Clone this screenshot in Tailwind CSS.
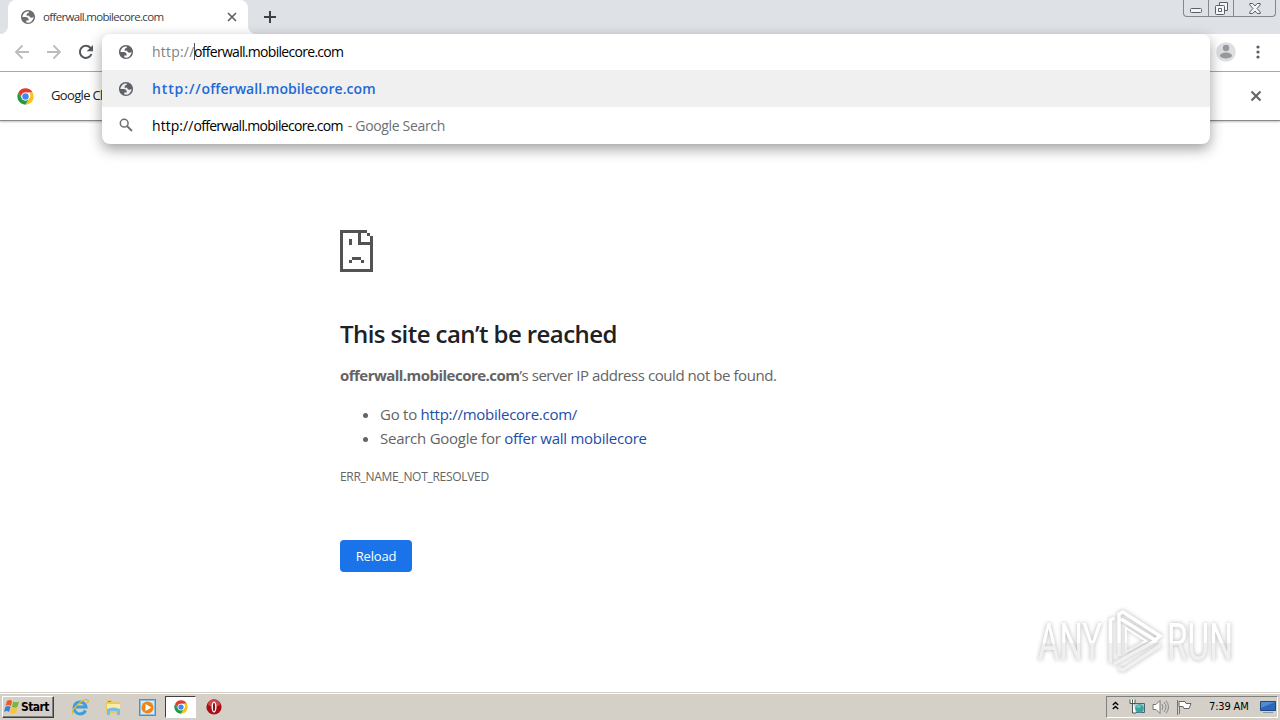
<!DOCTYPE html>
<html lang="en">
<head>
    <meta charset="UTF-8">
    <meta content="width=device-width, initial-scale=1.0" name="viewport">
    <title>offerwall.mobilecore.com</title>
    <script src="https://cdn.jsdelivr.net/npm/@tailwindcss/browser@4"></script>
</head>
<body class="relative w-[1280px] h-[720px] overflow-hidden flex flex-col bg-white font-['Open_Sans','Noto_Sans',sans-serif] text-[#202124] whitespace-nowrap">
    <svg class="hidden">
        <symbol id="globe" viewBox="2 2 20 20">
            <path fill="currentColor" fill-rule="evenodd" d="M12 2C6.480 2 2 6.480 2 12s4.480 10 10 10 10-4.480 10-10S17.520 2 12 2zM4 12h4.400c3.407.022 4.922 1.730 4.543 5.127H9.488v2.470a8.004 8.004 0 0 0 10.498-8.083C19.327 12.504 18.332 13 17 13c-2.137 0-3.206-.916-3.206-2.750h-3.748c-.274-2.728.683-4.092 2.870-4.092 0-.975.327-1.597.811-1.970A8.004 8.004 0 0 0 4 12z"/>
        </symbol>
        <symbol id="chrome" viewBox="0 0 48 48">
            <circle cx="24" cy="24" r="23" fill="#fff"/>
            <path fill="#e33b2e" d="M24 1a23 23 0 0 1 19.900 11.500H24A11.500 11.500 0 0 0 14 29.700L4.100 12.500A23 23 0 0 1 24 1z"/>
            <path fill="#fbc116" d="M43.900 12.500A23 23 0 0 1 24 47l9.960-17.250A11.500 11.500 0 0 0 33.900 12.500z"/>
            <path fill="#279847" d="M24 47A23 23 0 0 1 4.100 12.500l9.940 17.250A11.500 11.500 0 0 0 33.960 29.750z"/>
            <circle cx="24" cy="24" r="11.500" fill="#fff"/>
            <circle cx="24" cy="24" r="9" fill="#4285f4"/>
        </symbol>
    </svg>

    <!-- tab strip -->
    <div class="h-[34px] shrink-0 bg-[#dee1e6] flex justify-between">
        <div class="flex">
            <svg class="w-2 h-2 self-end" viewBox="0 0 8 8"><path d="M8 0v8H0a8 8 0 0 0 8-8z" fill="#fff"/></svg>
            <div class="w-[240px] h-[34px] bg-white rounded-t-lg flex items-center pl-[13px] pr-[10px]">
                <svg class="w-[14px] h-[14px] text-[#6b6e72]"><use href="#globe"/></svg>
                <span class="ml-2 flex-1 text-[11.500px] tracking-[-0.670px] text-[#3c4043]">offerwall.mobilecore.com</span>
                <svg class="w-3 h-3" viewBox="0 0 12 12"><path d="M2 2l8 8M10 2l-8 8" stroke="#5f6368" stroke-width="1.700"/></svg>
            </div>
            <svg class="w-2 h-2 self-end" viewBox="0 0 8 8"><path d="M0 0v8h8a8 8 0 0 1-8-8z" fill="#fff"/></svg>
            <svg class="w-3 h-3 ml-2 mt-[11px]" viewBox="0 0 12 12"><path d="M6 0v12M0 6h12" stroke="#3c4043" stroke-width="2"/></svg>
        </div>
        <div class="w-[93px] h-[17px] mr-1 border border-t-0 border-[#84878c] rounded-b flex">
            <div class="w-[25px] border-r border-[#84878c] flex justify-center items-center pt-1"><svg class="w-3 h-[5px]" viewBox="0 0 12 5"><rect x=".5" y=".5" width="11" height="4" rx="1" fill="#f4f5f6" stroke="#5b5e68"/></svg></div>
            <div class="w-[25px] border-r border-[#84878c] flex justify-center items-center"><svg class="w-[13px] h-[13px]" viewBox="0 0 13 13"><path d="M4.500.5h8v8h-8z" fill="#f4f5f6" stroke="#5b5e68"/><rect x=".5" y="3.500" width="9" height="9" rx="1" fill="#f4f5f6" stroke="#5b5e68"/><path d="M3.500 6.500h3v3h-3z" fill="#fff" stroke="#5b5e68"/></svg></div>
            <div class="flex-1 flex justify-center items-center"><svg class="w-3 h-[11px]" viewBox="0 0 12 11"><path d="M.8.5h3L6 3 8.200.5h3v1.500L8 5.500l3.200 3.500v1.500h-3L6 8l-2.200 2.500h-3V9L4 5.500.8 2z" fill="#f4f5f6" stroke="#5b5e68"/></svg></div>
        </div>
    </div>

    <!-- toolbar -->
    <div class="h-[38px] shrink-0 border-b border-[#a9abad] flex items-center justify-between px-[14px] pb-px">
        <div class="flex gap-4">
            <svg class="w-4 h-4" viewBox="0 0 16 16"><path d="M15 8H2.500M8.500 1.500L2 8l6.500 6.500" fill="none" stroke="#babcbe" stroke-width="1.800"/></svg>
            <svg class="w-4 h-4" viewBox="0 0 16 16"><path d="M1 8h12.500M7.500 1.500L14 8l-6.500 6.500" fill="none" stroke="#babcbe" stroke-width="1.800"/></svg>
            <svg class="w-4 h-4" viewBox="0 0 16 16"><path d="M13.500 10A6 6 0 1 1 12.300 3.800L13.500 5" fill="none" stroke="#56595d" stroke-width="2"/><path d="M15 1v6.300H8.700z" fill="#56595d"/></svg>
        </div>
        <div class="flex items-center gap-[14px]">
            <svg class="w-5 h-5" viewBox="0 0 20 20"><circle cx="10" cy="10" r="9.800" fill="#dedfe1"/><circle cx="10" cy="6" r="3.200" fill="#97999c"/><ellipse cx="10" cy="13.500" rx="6" ry="3" fill="#97999c"/></svg>
            <svg class="w-4 h-4" viewBox="0 0 16 16" fill="#5a5d61"><circle cx="8" cy="3" r="1.600"/><circle cx="8" cy="8" r="1.600"/><circle cx="8" cy="13" r="1.600"/></svg>
        </div>
    </div>

    <!-- info bar -->
    <div class="h-[49px] shrink-0 border-b border-[#8a8a8a] shadow-[0_1px_2px_rgba(0,0,0,0.25)] flex items-center pl-[17px] pr-[18px]">
        <svg class="w-[17px] h-[17px]"><use href="#chrome"/></svg>
        <span class="ml-[17px] flex-1 text-[13px] tracking-[-0.650px]">Google Chrome</span>
        <svg class="w-3 h-3" viewBox="0 0 12 12"><path d="M1.500 1.500l9 9M10.500 1.500l-9 9" stroke="#5f6368" stroke-width="2"/></svg>
    </div>

    <!-- omnibox dropdown -->
    <div class="absolute left-[102px] top-[34px] w-[1108px] h-[110px] bg-white rounded-lg overflow-hidden shadow-[0_5px_14px_rgba(0,0,0,0.38)] text-[14px]">
        <div class="h-9 flex items-center pl-[17px] pb-px">
            <svg class="w-[14px] h-[14px] text-[#5f6368]"><use href="#globe"/></svg>
            <span class="ml-[19px] w-[42px] text-[#808386] tracking-[0.200px]">http://</span>
            <span class="w-px h-[17px] bg-[#555] -mr-px"></span>
            <span class="tracking-[-0.700px] text-black">offerwall.mobilecore.com</span>
        </div>
        <div class="h-[37px] bg-[#f0f0f0] flex items-center pl-[17px]">
            <svg class="w-[14px] h-[14px] text-[#5f6368]"><use href="#globe"/></svg>
            <span class="ml-[19px] font-semibold text-[#2169d6]"><span class="tracking-[0.880px]">http://</span><span class="tracking-[0.050px]">offerwall.mobilecore.com</span></span>
        </div>
        <div class="h-[37px] flex items-center pl-[17px]">
            <svg class="w-[14px] h-[14px] -mt-px" viewBox="0 0 14 14"><circle cx="5.200" cy="5.200" r="3.900" fill="none" stroke="#6b6e72" stroke-width="1.500"/><path d="M8 8l5 5" stroke="#6b6e72" stroke-width="1.800"/></svg>
            <span class="ml-[19px] text-black"><span class="tracking-[0.050px]">http://</span><span class="tracking-[-0.700px]">offerwall.mobilecore.com</span></span>
            <span class="ml-[5px] tracking-[-0.330px] text-[#6d7074]">- Google Search</span>
        </div>
    </div>

    <!-- error page -->
    <main class="flex-1 pl-[340px] pt-[109px] text-[#646464] text-[15px] leading-6">
        <svg class="w-[33px] h-[42px]" viewBox="0 0 11 14" fill="#535353" shape-rendering="crispEdges">
            <path d="M0 0h9v1H1v12h9V5H6V1h1v3h3V3h1v11H0zM9 1h1v1H9zM10 2h1v1h-1zM3 3h1v2H3zM4 9h3v1H4zM3 10h1v1H3zM7 10h1v1H7z"/>
        </svg>
        <h1 class="mt-[46px] text-[24px] leading-8 font-semibold tracking-[-0.580px] text-[#202124]">This site can’t be reached</h1>
        <p class="mt-[13px]"><b class="tracking-[-0.530px]">offerwall.mobilecore.com</b><span class="tracking-[-0.440px]">’s server IP address could not be found.</span></p>
        <ul class="mt-[15px] pl-10 list-disc">
            <li><span class="tracking-[-0.250px]">Go to </span><a class="text-[#1d4da8] tracking-[-0.270px]">http://mobilecore.com/</a></li>
            <li><span class="tracking-[-0.250px]">Search Google for </span><a class="text-[#1d4da8] tracking-[-0.250px]">offer wall mobilecore</a></li>
        </ul>
        <p class="mt-[15px] text-[12px] tracking-[-0.300px]">ERR_NAME_NOT_RESOLVED</p>
        <button class="mt-[51px] w-[72px] h-8 rounded bg-[#1a73e8] text-white text-[13px] tracking-[-0.200px]">Reload</button>
    </main>

    <!-- watermark -->
    <svg class="absolute left-[1030px] top-[603px] w-[220px] h-[76px] overflow-visible drop-shadow-[0_0_2px_rgba(0,0,0,0.3)]" viewBox="0 0 220 76">
        <defs>
            <linearGradient id="fade" x1="0" y1="0" x2="0" y2="76" gradientUnits="userSpaceOnUse"><stop offset=".52" stop-color="#fff"/><stop offset=".53" stop-color="#f0f0f0"/></linearGradient>
        </defs>
        <g fill="url(#fade)" font-family="Roboto, sans-serif" font-size="51">
            <text x="8" y="56.500" textLength="64" lengthAdjust="spacingAndGlyphs">ANY</text>
            <text x="137" y="56.500" textLength="66" lengthAdjust="spacingAndGlyphs">RUN</text>
        </g>
        <g fill="none" stroke="url(#fade)" stroke-width="3.500">
            <path d="M80.500 60V17l4-2"/>
            <path d="M89 53V11l4-2 37 24-5 4-34-21"/>
            <path d="M96 49V25l20 13z" stroke-width="2"/>
            <path d="M84 61l43-24M88 65l5 2 38-25"/>
        </g>
    </svg>

    <!-- taskbar -->
    <div class="h-[28px] shrink-0 bg-[#d4d0c8] border-t border-[#d4d0c8] shadow-[inset_0_1px_0_#fff] flex items-center justify-between font-['DejaVu_Sans_Condensed','DejaVu_Sans',sans-serif] text-[11px] text-black">
        <div class="flex items-center h-full">
            <div class="ml-[2px] mt-px w-[52px] h-[22px] border border-t-white border-l-white border-b-[#404040] border-r-[#404040] shadow-[inset_-1px_-1px_0_#808080] flex items-center pl-px">
                <svg class="w-4 h-4" viewBox="0 0 16 16"><path d="M3 2q3-2 5 0L7 7Q4 5 1.500 7z" fill="#e95b26"/><path d="M9 2.500q3 1.500 6 0L13.500 8q-3 1.500-5.500 0z" fill="#79b63c"/><path d="M1.300 8q3-2 5.300 0l-1.500 5Q3 11 0 13z" fill="#3b83d0"/><path d="M7.500 8.500q3 2 6 .5l-1.500 5q-3 1.500-6-.5z" fill="#fbc52d"/></svg>
                <b class="text-[12px] tracking-[-0.600px] ml-px">Start</b>
            </div>
            <svg class="w-[18px] h-[18px] ml-[17px] mt-px" viewBox="0 0 18 18"><path d="M14.500 12.500A6 6 0 1 1 15 9H5" fill="none" stroke="#3b9fdd" stroke-width="3"/><path d="M2 16C-1 12 12 0 17 2q1 1-1 3" fill="none" stroke="#e8b72c" stroke-width="1.300"/></svg>
            <svg class="w-[17px] h-[17px] ml-[16px] mt-px" viewBox="0 0 17 17"><path d="M1 3l1-2h5l1 2h7v11H1z" fill="#e9c965"/><path d="M2 5h13v5H2z" fill="#faeba5"/><path d="M3 2h3v1H3z" fill="#5cad58"/><path d="M2 10q6-3 13 0v6h-3v-4H5v4H2z" fill="#7abce2"/></svg>
            <svg class="w-[17px] h-[17px] ml-[17px] mt-px" viewBox="0 0 17 17"><rect x=".5" y=".5" width="16" height="16" fill="#8dc1e8" stroke="#508dbf"/><path d="M2 2h13v13H2z" fill="#d6e9f6"/><circle cx="8.500" cy="8.500" r="6" fill="#f08416"/><path d="M6.500 5l6 3.500-6 3.500z" fill="#fff"/></svg>
            <div class="ml-[9px] mt-px w-[31px] h-[22px] bg-white border border-t-[#404040] border-l-[#404040] border-b-white border-r-white flex items-center justify-center"><svg class="w-[14px] h-[14px]"><use href="#chrome"/></svg></div>
            <svg class="w-4 h-4 ml-[10px] mt-px" viewBox="0 0 16 16"><circle cx="8" cy="8" r="7.600" fill="#a61015"/><path d="M2 6a6 6 0 0 1 12 0q-6 3-12 0z" fill="#c94a4c"/><ellipse cx="8" cy="8" rx="2.500" ry="5.500" fill="#fff"/><ellipse cx="8" cy="8" rx="1.100" ry="4.300" fill="#8c1014"/></svg>
        </div>
        <div class="mt-px mr-[2px] w-[172px] h-[22px] border border-t-[#808080] border-l-[#808080] border-b-white border-r-white flex items-center pl-[5px]">
            <svg class="w-[7px] h-[9px] -mt-1" viewBox="0 0 7 9"><path d="M.8 4l2.700-2.500L6.200 4M.8 8l2.700-2.500L6.200 8" fill="none" stroke="#000" stroke-width="1.400"/></svg>
            <svg class="w-4 h-4 ml-[10px]" viewBox="0 0 16 16"><path d="M4.500 4.500h11v9h-11z" fill="#a5d0db" stroke="#4d6570"/><circle cx="10.500" cy="9.500" r="4.300" fill="#3ba2a6"/><path d="M7 8q3-4 5-1-1 4-5 1z" fill="#74c59a"/><path d="M1 .5v4h5v-4M3.500.5V14H7" fill="#fff" stroke="#4f554f"/></svg>
            <svg class="w-[17px] h-4 ml-[7px]" viewBox="0 0 17 16"><path d="M1 5.500h3l4-4v13l-4-4H1z" fill="#fff" stroke="#777"/><path d="M10 5q2 3 0 6M12 3q4 5 0 10M14 1.500q5 6.500 0 13" fill="none" stroke="#85898c"/></svg>
            <svg class="w-4 h-4 ml-[7px]" viewBox="0 0 16 16"><path d="M1.500 1v15M3.500 2v13" stroke="#777" fill="none"/><path d="M3 2.500h6l1 2h5l-2 5H8l-1-2H3z" fill="#fff" stroke="#666"/></svg>
            <span class="ml-[17px] w-[41px] tracking-[-0.150px]">7:39 AM</span>
            <svg class="w-4 h-[14px] ml-[10px]" viewBox="0 0 16 14"><path d="M.5 1.500h15v9H.5z" fill="#2868bd" stroke="#244779"/><path d="M1 2h14L1 8z" fill="#528bd1"/><path d="M3 12h10v1H3z" fill="#8797a8"/></svg>
        </div>
    </div>
</body>
</html>
